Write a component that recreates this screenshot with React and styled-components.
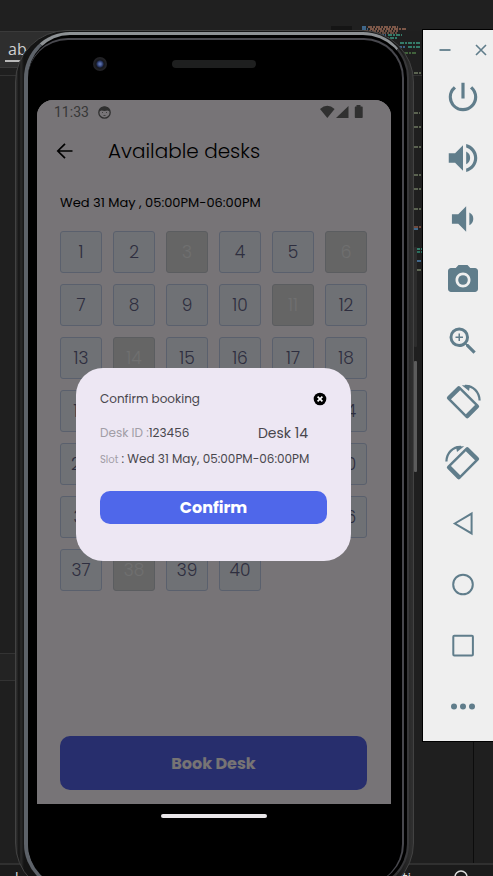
import React from "react";
import styled, { createGlobalStyle } from "styled-components";
import {
  MdPowerSettingsNew,
  MdVolumeUp,
  MdVolumeDown,
  MdPhotoCamera,
  MdZoomIn,
} from "react-icons/md";

const GlobalStyle = createGlobalStyle`
  *, *::before, *::after { box-sizing: border-box; }
  body { margin: 0; background: #1f1f1f; }
  button { font: inherit; border: 0; padding: 0; background: none; cursor: pointer; }
  h1, h2, p { margin: 0; font-weight: 400; }
`;

const Desktop = styled.div`
  position: relative;
  height: 100vh;
  overflow: hidden;
  background: #1f1f1f;
  font-family: Poppins, Inter, sans-serif;
`;

/* Code editor behind the emulator */
const Editor = styled.div`
  position: absolute;
  inset: 0;
  display: flex;
  flex-direction: column;
`;

const EditorTitle = styled.div`
  height: 31px;
  background: #202020;
`;

const EditorTools = styled.div`
  width: 60px;
  height: 37px;
  padding-left: 5px;
  background: #2e2e2e;
  border-top: 1px solid #3a3a3a;
  border-bottom: 1px solid #3a3a3a;
  color: #d0d0d0;
  font: 16px/34px "Open Sans", sans-serif;
`;

const WholeWord = styled.span`
  padding-left: 3px;
  border-bottom: 2px solid #b8b8b8;
`;

const EditorBody = styled.div`
  flex: 1;
  display: flex;
  justify-content: space-between;
  margin-top: 7px;
  border-top: 1px solid #333333;
`;

const EditorSide = styled.div`
  width: 16px;
  display: flex;
  flex-direction: column;
  justify-content: flex-end;
  padding-bottom: 182px;
`;

const EditorSection = styled.div`
  height: 28px;
  background: #232323;
  border-top: 1px solid #333333;
  border-bottom: 1px solid #333333;
`;

const EditorGutter = styled.div`
  width: 20px;
  border-left: 1px solid #0c0c0c;
`;

const EditorFooter = styled.div`
  display: flex;
  justify-content: space-between;
  height: 13px;
  padding: 5px 24px 0 15px;
  overflow: hidden;
  background: #1b1b1b;
  border-top: 2px solid #303030;
  color: #dddddd;
  font: 14px/16px "Open Sans", sans-serif;
`;

const FooterGroup = styled.span`
  display: flex;
  gap: 42px;
`;

const Minimap = styled.svg`
  position: absolute;
  top: 25px;
  right: 71px;
  width: 92px;
  height: 260px;
`;

/* Emulator windows */
const Emulator = styled.div`
  position: relative;
  display: grid;
  grid-template-columns: minmax(0, 1fr) 71px;
  gap: 8px;
  align-items: start;
  padding: 30px 0 0 15px;
`;

const Shell = styled.div`
  position: relative;
  padding: 1px 4px 4px 8px;
  border: 1px solid #424242;
  border-radius: 52px;
  background: linear-gradient(90deg, #333333, #141414 3px, #2c2c2c 5px, #141414 8px, #161616 380px, #303030);
`;

const Rim = styled.div`
  padding: 3px 3px 3px 0;
  border: solid;
  border-width: 3px 2px 3px 4px;
  border-color: #8d9194 #38383a #333333 #5d6269;
  border-radius: 46px;
  background: #000000;
`;

const Glass = styled.div`
  padding: 0 11px 56px 9px;
  border: solid #48484e;
  border-width: 2px 2px 0 0;
  border-radius: 40px;
  background: #000000;
`;

const SideKey = styled.span`
  position: absolute;
  top: ${(p) => p.$top}px;
  right: -4px;
  width: 3px;
  height: ${(p) => p.$length}px;
  border-radius: 1px;
  background: ${(p) => p.$tone};
`;

const Bezel = styled.div`
  display: grid;
  grid-template-columns: 1fr 84px 1fr;
  align-items: center;
  height: 60px;
  padding-bottom: 12px;
`;

const Lens = styled.span`
  width: 14px;
  height: 14px;
  margin-left: 56px;
  border-radius: 50%;
  background: radial-gradient(circle, #5a70aa 0 1px, #25325f 3px, #15171c 4px, #222226 6px);
`;

const Earpiece = styled.span`
  height: 8px;
  border-radius: 4px;
  background: #1e1f1f;
`;

const Display = styled.div`
  position: relative;
  overflow: hidden;
  border-radius: 16px 16px 0 0;
`;

const AppScreen = styled.main`
  display: flex;
  flex-direction: column;
  min-height: calc(100vh - 172px);
  padding-bottom: 14px;
  background: #eee8ee;
`;

const StatusBar = styled.div`
  display: flex;
  align-items: center;
  justify-content: space-between;
  height: 24px;
  padding: 0 28px 0 17px;
  color: #707070;
  font: 14px/24px Roboto, sans-serif;
`;

const StatusGroup = styled.div`
  display: flex;
  align-items: center;
  gap: 9px;
`;

const AppHeader = styled.header`
  display: flex;
  align-items: center;
  gap: 34px;
  height: 54px;
  padding-left: 19px;
`;

const BackButton = styled.button`
  display: flex;
  color: #000000;
`;

const Title = styled.h1`
  font-size: 20px;
  font-weight: 300;
  line-height: 28px;
  color: #000000;
`;

const SlotLine = styled.p`
  margin: 15px 23px 18px;
  font-size: 13px;
  line-height: 20px;
  color: #000000;
`;

const DeskGrid = styled.div`
  display: grid;
  grid-template-columns: repeat(6, 1fr);
  gap: 11px;
  padding: 0 24px 0 23px;
`;

const Desk = styled.button`
  aspect-ratio: 1;
  border: 1px solid ${(p) => (p.disabled ? "#b6bac0" : "#b4c0da")};
  border-radius: 3px;
  background: ${(p) => (p.disabled ? "#cacaca" : "#dee2ea")};
  color: ${(p) => (p.disabled ? "#e0e0e0" : "#5c5c7e")};
  font-size: 17px;
  font-weight: 300;
`;

const PrimaryButton = styled.button`
  border-radius: 10px;
  background: #4f67ea;
  color: #ffffff;
  font-weight: 700;
  font-size: 16px;
  height: 33px;
`;

const BookButton = styled(PrimaryButton)`
  height: 54px;
  margin: auto 24px 0 23px;
  background: #4e5cda;
  color: #eee8e8;
`;

const Scrim = styled.div`
  position: absolute;
  inset: 0;
  display: flex;
  align-items: center;
  padding: 0 40px 0 39px;
  background: rgba(0, 0, 0, 0.5);
`;

const Dialog = styled.section`
  flex: 1;
  display: flex;
  flex-direction: column;
  padding: 21px 24px 37px;
  border-radius: 27px;
  background: #ede7f3;
  color: #48464c;
`;

const DialogRow = styled.div`
  display: flex;
  align-items: center;
  justify-content: space-between;
  height: 20px;
  margin-bottom: ${(p) => p.$space}px;
  padding-right: ${(p) => p.$inset || 0}px;
`;

const DialogTitle = styled.h2`
  font-size: 12px;
  line-height: 20px;
`;

const Detail = styled.p`
  font-size: ${(p) => p.$size || 12}px;
  line-height: 20px;
  white-space: nowrap;
`;

const Muted = styled.span`
  color: #a19da6;
  font-size: ${(p) => p.$size || 12}px;
`;

const CloseButton = styled.button`
  display: flex;
`;

const NavBar = styled.div`
  position: relative;
  display: flex;
  align-items: center;
  justify-content: center;
  height: 24px;
  background: #000000;
  z-index: 1;
  pointer-events: none;
`;

const HomePill = styled.span`
  width: 30%;
  height: 4px;
  border-radius: 2px;
  background: #e9e6e9;
`;

const Panel = styled.aside`
  padding: 0 0 4px 10px;
  border: solid #000000;
  border-width: 1px 0 1px 1px;
  margin-top: -1px;
  background: #efefef;
  color: #607d8b;
`;

const PanelHeader = styled.div`
  display: flex;
  align-items: center;
  justify-content: space-between;
  height: 36px;
  padding: 4px 6px 0;
`;

const PanelButton = styled.button`
  display: flex;
  align-items: center;
  justify-content: center;
  width: 100%;
  height: 61px;
  color: inherit;
`;

const WindowButton = styled.button`
  display: flex;
  color: inherit;
`;

function Glyph({ children }) {
  return (
    <svg width="40" height="40" viewBox="0 0 40 40" fill="none" stroke="currentColor" strokeWidth="2" aria-hidden="true">
      {children}
    </svg>
  );
}

function RotateShape() {
  return (
    <>
      <path
        transform="translate(20 20.2) rotate(45)"
        fill="currentColor"
        stroke="none"
        fillRule="evenodd"
        d="M-13-9H13Q15-9 15-7V7Q15 9 13 9H-13Q-15 9-15 7V-7Q-15-9-13-9ZM-10.5-6.5V6.5H10.5V-6.5Z"
      />
      <path d="M22 3.8C30 3.5 36.5 10 36.6 18.6" strokeWidth="2.2" />
      <path d="M18.8 3.2 27 3.4 26 9Z" fill="currentColor" stroke="none" />
    </>
  );
}

const tools = [
  { label: "Power", icon: <MdPowerSettingsNew size={38} /> },
  { label: "Volume up", icon: <MdVolumeUp size={38} /> },
  { label: "Volume down", icon: <MdVolumeDown size={38} /> },
  { label: "Take screenshot", icon: <MdPhotoCamera size={36} /> },
  { label: "Zoom", icon: <MdZoomIn size={36} /> },
  { label: "Rotate left", icon: <Glyph><RotateShape /></Glyph> },
  { label: "Rotate right", icon: <Glyph><g transform="translate(40 0) scale(-1 1)"><RotateShape /></g></Glyph> },
  { label: "Back", icon: <Glyph><path d="M11.8 19.5 28.6 9.6V29.4Z" /></Glyph> },
  { label: "Home", icon: <Glyph><circle cx="20" cy="19.5" r="9.8" /></Glyph> },
  { label: "Overview", icon: <Glyph><rect x="10.3" y="9.8" width="19.6" height="19.6" rx="1" /></Glyph> },
  {
    label: "More",
    icon: (
      <Glyph>
        <g fill="currentColor" stroke="none">
          <circle cx="11" cy="19.5" r="3" />
          <circle cx="20" cy="19.5" r="3" />
          <circle cx="29" cy="19.5" r="3" />
        </g>
      </Glyph>
    ),
  },
];

const takenDesks = [3, 6, 11, 14, 38];
const desks = Array.from({ length: 40 }, (_, i) => i + 1);

const codeLines = [
  [32, 1, 5, "#4a7ba8"], [38, 1, 30, "#9a6a55"], [32, 3, 6, "#4a7ba8"], [40, 3, 36, "#9a6a55"],
  [34, 5, 34, "#8a6250"], [44, 7, 24, "#7a5a4c"], [50, 9, 6, "#4a7ba8"], [58, 9, 14, "#3d9a82"],
  [52, 12, 16, "#3d9a82"], [70, 17, 20, "#3d9a82"], [68, 21, 8, "#4a7ba8"], [78, 21, 13, "#3d9a82"],
  [74, 27, 12, "#4d7a45"], [84, 47, 7, "#6f7a62"], [84, 87, 6, "#6f7a62"], [84, 101, 7, "#6f7a62"],
  [84, 121, 7, "#6f7a62"], [84, 149, 7, "#6f7a62"], [84, 163, 7, "#6f7a62"], [84, 183, 7, "#6f7a62"],
  [84, 201, 7, "#8a5a4a"], [84, 203, 5, "#4a7ba8"], [86, 223, 6, "#3d9a82"], [86, 226, 6, "#2f8a74"],
  [87, 235, 4, "#4a7ba8"], [87, 244, 5, "#6f7a62"],
];

function EditorBackdrop() {
  return (
    <Editor>
      <EditorTitle />
      <EditorTools><WholeWord>ab</WholeWord></EditorTools>
      <EditorBody>
        <EditorSide><EditorSection /></EditorSide>
        <EditorGutter />
      </EditorBody>
      <EditorFooter>
        <span>l</span>
        <FooterGroup>
          <span>ti</span>
          <svg width="16" height="18" viewBox="0 0 16 18" fill="none" stroke="#dddddd" strokeWidth="1.5" aria-hidden="true">
            <circle cx="8" cy="7" r="6" />
          </svg>
        </FooterGroup>
      </EditorFooter>
      <Minimap viewBox="0 0 92 260" aria-hidden="true">
        <rect x="1" y="1" width="21" height="5" fill="#151515" />
        {codeLines.map(([x, y, w, fill], i) => (
          <path key={i} d={`M${x} ${y + 1}h${w}`} stroke={fill} strokeWidth="1.6" strokeDasharray="4 1 2 1" />
        ))}
      </Minimap>
    </Editor>
  );
}

function StatusIcons() {
  return (
    <svg width="43" height="14" viewBox="0 0 43 14" fill="#606060" aria-hidden="true">
      <path d="M0 4Q7.3-2.6 14.6 4L7.3 13Z" />
      <path d="M16 13 28.5 1V13Z" />
      <path d="M36.5 0h4v1.5H42q.7 0 .7.7V12.3q0 .7-.7.7H35.500q-.7 0-.7-.7V2.2q0-.7.7-.7h1Z" />
    </svg>
  );
}

export default function App() {
  return (
    <Desktop>
      <GlobalStyle />
      <EditorBackdrop />
      <Emulator>
        <Shell>
          <SideKey $top={216} $length={100} $tone="#2c2c2c" />
          <SideKey $top={330} $length={111} $tone="#5c5c5c" />
          <Rim>
            <Glass>
              <Bezel>
                <Lens />
                <Earpiece />
              </Bezel>
              <Display>
                <AppScreen>
                  <StatusBar>
                    <StatusGroup>
                      <span>11:33</span>
                      <svg width="13" height="13" viewBox="0 0 13 13" aria-hidden="true">
                        <circle cx="6.5" cy="6.5" r="5.7" fill="none" stroke="#606060" strokeWidth="1.3" />
                        <path d="M1 5.5C1 2 4 .8 6.5.8S12 2 12 5.5L9.5 4.600 6.5 5 3.5 4.600Z" fill="#606060" />
                        <path d="M4 6.5h1M8 6.5h1M5.5 9.5h2" stroke="#808080" />
                      </svg>
                    </StatusGroup>
                    <StatusIcons />
                  </StatusBar>
                  <AppHeader>
                    <BackButton aria-label="Back">
                      <svg width="18" height="18" viewBox="0 0 18 18" fill="none" stroke="currentColor" strokeWidth="1.7" aria-hidden="true">
                        <path d="M16.5 9H2M9 1.8 1.8 9 9 16.2" />
                      </svg>
                    </BackButton>
                    <Title>Available desks</Title>
                  </AppHeader>
                  <SlotLine>Wed 31 May , 05:00PM-06:00PM</SlotLine>
                  <DeskGrid>
                    {desks.map((n) => (
                      <Desk key={n} disabled={takenDesks.includes(n)}>{n}</Desk>
                    ))}
                  </DeskGrid>
                  <BookButton>Book Desk</BookButton>
                </AppScreen>
                <NavBar><HomePill /></NavBar>
                <Scrim>
                  <Dialog role="dialog" aria-labelledby="dialog-title">
                    <DialogRow $space={14}>
                      <DialogTitle id="dialog-title">Confirm booking</DialogTitle>
                      <CloseButton aria-label="Close">
                        <svg width="14" height="14" viewBox="0 0 14 14" aria-hidden="true">
                          <circle cx="7" cy="7" r="6.3" fill="#000000" />
                          <path d="M4.6 4.6 9.4 9.4M9.4 4.6 4.6 9.4" stroke="#ffffff" strokeWidth="1.7" />
                        </svg>
                      </CloseButton>
                    </DialogRow>
                    <DialogRow $space={7} $inset={19}>
                      <Detail><Muted>Desk ID :</Muted>123456</Detail>
                      <Detail $size={14}>Desk 14</Detail>
                    </DialogRow>
                    <DialogRow $space={21}>
                      <Detail><Muted $size={10}>Slot</Muted> : Wed 31 May, 05:00PM-06:00PM</Detail>
                    </DialogRow>
                    <PrimaryButton>Confirm</PrimaryButton>
                  </Dialog>
                </Scrim>
              </Display>
            </Glass>
          </Rim>
        </Shell>
        <Panel>
          <PanelHeader>
            <WindowButton aria-label="Minimize">
              <svg width="12" height="12" viewBox="0 0 12 12" stroke="currentColor" strokeWidth="1.8" aria-hidden="true">
                <path d="M.5 6h11" />
              </svg>
            </WindowButton>
            <WindowButton aria-label="Close emulator">
              <svg width="12" height="12" viewBox="0 0 12 12" stroke="currentColor" strokeWidth="1.6" aria-hidden="true">
                <path d="M1 1 11 11M11 1 1 11" />
              </svg>
            </WindowButton>
          </PanelHeader>
          {tools.map((t) => (
            <PanelButton key={t.label} aria-label={t.label}>{t.icon}</PanelButton>
          ))}
        </Panel>
      </Emulator>
    </Desktop>
  );
}
